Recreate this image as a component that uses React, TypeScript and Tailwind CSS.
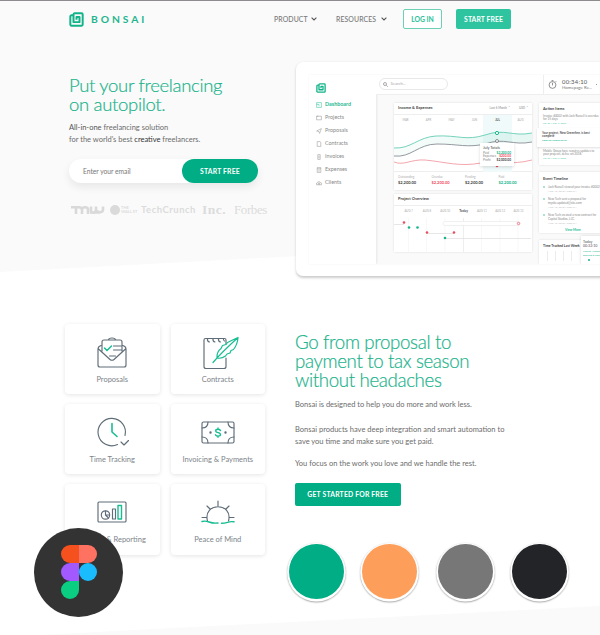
import type { ReactNode } from "react";

function BonsaiMark({ className }: { className: string }) {
  return (
    <svg viewBox="0 0 16 16" fill="none" stroke="#12b389" strokeWidth="2.1" className={className}>
      <path d="M4.3 3.5H2.6A1.2 1.2 0 0 0 1.4 4.7V13.400a1.200 1.200 0 0 0 1.200 1.200H13.400a1.200 1.200 0 0 0 1.200-1.200V2.600a1.200 1.200 0 0 0-1.200-1.200H6A1.200 1.200 0 0 0 4.800 2.600V10.800H11.200V5.300H8v2.900" strokeLinejoin="round" />
    </svg>
  );
}

function Chevron() {
  return (
    <svg viewBox="0 0 6 4" className="h-1 w-1.5" fill="none" stroke="#555" strokeWidth="1.1">
      <path d="M.6.7 3 3 5.400.7" />
    </svg>
  );
}

function Header() {
  return (
    <header className="flex h-[37px] items-center border-t border-[#8d8b8d] pl-[69px]">
      <BonsaiMark className="h-[15px] w-[15px]" />
      <span className="ml-[7px] w-[176px] text-[10.300px] font-bold leading-none tracking-[2.900px] text-[#1db58e]">BONSAI</span>
      <nav className="ml-[7px] flex items-center text-[6.900px] font-medium text-[#777]">
        <span className="w-[37px] tracking-[0.100px]">PRODUCT</span>
        <Chevron />
        <span className="ml-[19px] w-[45px] tracking-[0.100px]">RESOURCES</span>
        <Chevron />
      </nav>
      <a className="ml-[16px] flex h-5 w-[39px] items-center justify-center rounded-[2px] border border-[#6dd0b6] bg-white text-[6.800px] font-bold text-[#2abf98]">LOG IN</a>
      <a className="ml-[14px] flex h-5 w-[55px] items-center justify-center rounded-[2px] bg-[#2ec4a0] text-[6.800px] font-bold tracking-[0.100px] text-white">START FREE</a>
    </header>
  );
}

function PressLogos() {
  return (
    <div className="mt-[19px] flex h-4 items-center text-[#dcdcdc]">
      <svg viewBox="0 0 34 10" className="ml-[2px] h-[10px] w-[34px]" fill="none" stroke="#d9d9d9" strokeWidth="2.600">
        <path d="M0 2.300h8c3 0 2 1 2 2M5 2v7M11 9V4.500c0-3 6-3 6 0V9M20 1.500v4c0 3 4 3 5 0v-4M26 5.500c1 3 6 2 6-1v-3M19 7.500h10" />
      </svg>
      <span className="ml-[5px] h-[10px] w-[10px] rounded-full bg-[#dadada]" />
      <span className="ml-px w-[18px] text-[4px] font-bold leading-[4px]">THE<br />WALL ST</span>
      <span className="ml-[2px] w-[61px] text-[9.500px] font-bold tracking-[0.500px]">TechCrunch</span>
      <span className="w-[32px] font-['Liberation_Serif',serif] text-[13.500px] font-bold tracking-[0.500px]">Inc.</span>
      <span className="font-['Liberation_Serif',serif] text-[13px] tracking-[-0.400px]">Forbes</span>
    </div>
  );
}

function HeroCopy() {
  return (
    <div className="w-[296px] shrink-0 pl-[69px] pt-[38.500px]">
      <h1 className="whitespace-nowrap text-[18.500px] font-light leading-[19px] tracking-[-0.320px] text-[#20b38c] [-webkit-text-stroke:0.200px_#20b38c]">Put your freelancing<br />on autopilot.</h1>
      <p className="mt-[8.500px] whitespace-nowrap text-[7.500px] leading-[11.500px] text-[#6c6c6c]">
        <span className="text-[#555]">All-in-one</span> freelancing solution<br />for the world's best <span className="text-[#333]">creative</span> freelancers.
      </p>
      <form className="mt-[14px] flex h-6 w-[189px] items-center rounded-full bg-white shadow-[0_4px_9px_rgba(0,0,0,0.080)]">
        <span className="flex-1 pl-[14px] text-[6.700px] text-[#777]">Enter your email</span>
        <a className="flex h-6 w-[76px] items-center justify-center rounded-full bg-[#00ad84] text-[6.800px] font-bold tracking-[0.200px] text-white">START FREE</a>
      </form>
      <PressLogos />
    </div>
  );
}

const menu = [
  ["Dashboard", "M1 1h8v8H1zM1 4h4M5 4v3"],
  ["Projects", "M1 2h8v6H1zM1 2h3"],
  ["Proposals", "M1 5 9 1 6 9 5 6z"],
  ["Contracts", "M2 1h5l1 2v6H2z"],
  ["Invoices", "M3 1h4v8H3zM4 4h2M4 6h2"],
  ["Expenses", "M2 1h6v8H2zM2 3h6M4 5h2M4 7h2"],
  ["Clients", "M1 8V5q4-5 8 0v3zM4 8V5h2v3"],
];

function Sidebar() {
  return (
    <aside className="w-[67px] shrink-0 bg-white pl-[7px] pt-[8px] shadow-[1px_0_2px_rgba(0,0,0,0.080)]">
      <BonsaiMark className="h-[10px] w-[10px]" />
      <ul className="mt-[5.500px]">
        {menu.map(([name, d], i) => (
          <li key={name} className={i === 0 ? "flex h-[13px] items-center gap-[3px] text-[5.400px] font-bold text-[#1fb991]" : "flex h-[13px] items-center gap-[3px] text-[5.400px] text-[#8a8a8a]"}>
            <svg viewBox="0 0 10 10" className="h-[6px] w-[6px]" fill="none" stroke="currentColor" strokeWidth="0.800"><path d={d} /></svg>
            {name}
          </li>
        ))}
      </ul>
    </aside>
  );
}

function Topbar() {
  return (
    <div className="flex h-[20px] items-center border-b border-[#eee] bg-white pl-[3px]">
      <div className="flex h-3 w-[69px] items-center gap-[2.500px] rounded-full border border-[#e8e8e8] pl-[3px] text-[4.200px] text-[#aaa]">
        <svg viewBox="0 0 10 10" className="h-[5px] w-[5px]" fill="none" stroke="#777" strokeWidth="1.200"><circle cx="4" cy="4" r="3" /><path d="m6.500 6.500 3 3" /></svg>
        Search...
      </div>
      <div className="ml-[95px] flex h-[20px] items-center gap-[5px] border-l border-[#eee] pl-[4px]">
        <svg viewBox="0 0 10 10" className="h-[9px] w-[9px]" fill="none" stroke="#777" strokeWidth="0.900"><circle cx="5" cy="5.500" r="3.800" /><path d="M4 .5h2M5 3v3M8.500 2l.8-.8" /></svg>
        <div className="w-[33px] whitespace-nowrap leading-[6px]">
          <div className="text-[5.800px] tracking-[0.300px] text-[#555]">00:34:10</div>
          <div className="text-[4.400px] leading-[5px] text-[#777]">Homepage Re...</div>
        </div>
        <i className="-ml-[4px] h-px w-px bg-[#999]" />
      </div>
    </div>
  );
}

function IncomeCard() {
  const months = ["MAR", "APR", "MAY", "JUN", "JUL", "AUG"];
  const stats = [
    ["Outstanding", "$2,200.00", "text-[#444]"],
    ["Overdue", "$2,200.00", "text-[#ef4e5e]"],
    ["Pending", "$2,200.00", "text-[#444]"],
    ["Paid", "$2,200.00", "text-[#14b58b]"],
  ];
  return (
    <section className="h-[87px] bg-white shadow-[0_0_2px_rgba(0,0,0,0.120)]">
      <div className="flex h-[12px] items-center justify-between border-b border-[#eee] pl-1 pr-[4px] text-[4px]">
        <b className="text-[#444]">Income &amp; Expenses</b>
        <span className="flex gap-[9px] text-[3px] text-[#888]"><span>Last 6 Month&nbsp; ˅</span><span>USD&nbsp; ˅</span></span>
      </div>
      <div className="relative h-[57px] border-b border-[#eee]">
        <svg viewBox="0 0 138 57" className="h-[57px] w-[138px]" fill="none">
          <defs><linearGradient id="band" x2="1"><stop stopColor="#17b88f" stopOpacity=".03" /><stop offset="1" stopColor="#17b88f" stopOpacity=".11" /></linearGradient></defs>
          <path d="M89 0h29v57H89z" fill="#f1fafa" />
          <path d="M0 33c17 1 24-11 42-12 22-1 30 5 49-1 20-7 27 2 47-2v9c-20 3-27-5-47 2-18 5-30-2-48 0-17 1-25 14-43 12z" fill="url(#band)" />
          <path d="M0 33c17 1 24-11 42-12 22-1 30 5 49-1 20-7 27 2 47-2" stroke="#65cdb4" strokeWidth=".9" />
          <path d="M0 41c17 2 24-12 43-12 22 0 30 4 48 0 20-7 27 2 47-2" stroke="#888d94" strokeWidth=".9" />
          <path d="M0 47c10 4 17-3 31-2 21 2 34 7 56 3 21-4 28 3 51-3" stroke="#f08e98" strokeWidth=".8" />
          <circle cx="103" cy="18" r="1.600" fill="white" stroke="#17b88f" /><circle cx="103" cy="26" r="1.500" fill="white" stroke="#666" strokeWidth=".7" />
          <circle cx="103" cy="51" r="1.300" fill="#e74d5e" />
        </svg>
        <div className="absolute left-0 top-[3px] flex w-[138px] text-center text-[2.800px] text-[#aaa]">
          {months.map((m) => <span key={m} className={m === "JUL" ? "w-[23px] font-bold text-[#555]" : "w-[23px]"}>{m}</span>)}
        </div>
        <div className="absolute left-[86px] top-[28px] h-[23px] w-[34px] bg-white px-[3px] pt-[3px] text-[3.200px] leading-[3.500px] text-[#888] shadow-[0_1px_3px_rgba(0,0,0,0.150)]">
          <div className="mb-[2.500px] text-[3.800px] text-[#444]">July Totals</div>
          <div className="flex justify-between">Paid<b className="text-[#14b58b]">$2,200.00</b></div>
          <div className="flex justify-between">Expenses<b className="text-[#ef4e5e]">$200.00</b></div>
          <div className="flex justify-between">Profit<b className="text-[#444]">$2,000.00</b></div>
        </div>
      </div>
      <div className="flex pl-[4px] pt-[3.500px]">
        {stats.map(([label, value, tone]) => (
          <div key={label} className="w-[34px] leading-[5px]">
            <div className="text-[3px] leading-[5px] text-[#aaa]">{label}</div>
            <div className={"text-[4px] font-bold leading-[5px] " + tone}>{value}</div>
          </div>
        ))}
      </div>
    </section>
  );
}

function ProjectCard() {
  return (
    <section className="mt-[4px] h-[58px] bg-white shadow-[0_0_2px_rgba(0,0,0,0.120)]">
      <div className="flex h-[12px] items-center border-b border-[#eee] pl-1 text-[4px] font-bold text-[#444]">Project Overview</div>
      <div className="flex h-[12px] items-center pl-[5.500px] text-center text-[2.800px] text-[#aaa]">
        {["AUG 7", "AUG 8", "AUG 10", "Today", "AUG 11", "AUG 12", "AUG 13"].map((d) => <span key={d} className={d === "Today" ? "w-[18.300px] text-[3.300px] font-bold text-[#555]" : "w-[18.300px]"}>{d}</span>)}
      </div>
      <svg viewBox="0 0 138 34" className="h-[34px] w-[138px]" fill="none">
        <path d="M14.500 0v34M32.500 0v34M51 0v34M87.500 0v34M106 0v34M124 0v34" stroke="#f5f5f5" strokeWidth=".7" />
        <path d="M69.500 0v34" stroke="#e2e2e2" strokeWidth=".6" />
        <path d="M0 6.500h10M32 15.500h28M51 20.500h86" stroke="#e1e1e1" strokeWidth=".8" />
        <rect x="49" y="3.500" width="77" height="4" rx="2" fill="white" stroke="#e6e6e6" strokeWidth=".6" />
        <g fill="#e74d5e"><circle cx="10" cy="4.500" r="1.300" /><circle cx="33" cy="14.500" r="1.300" /><circle cx="60" cy="14.500" r="1.300" /></g>
        <circle cx="124.500" cy="5.500" r="1.200" fill="#fff" stroke="#e74d5e" strokeWidth=".7" />
        <g fill="#14b58b"><circle cx="15" cy="9.500" r="1.300" /><circle cx="23.500" cy="9.500" r="1.300" /><circle cx="51" cy="20" r="1.300" /></g>
      </svg>
    </section>
  );
}

function Activity() {
  return (
    <div className="w-[74px] shrink-0 whitespace-nowrap text-[3px] leading-[4px] text-[#888]">
      <section className="h-[62px] bg-white pt-[4px] shadow-[0_0_2px_rgba(0,0,0,0.120)]">
        <b className="block pl-[4px] text-[3.800px] leading-[4px] text-[#444]">Action Items</b>
        <div className="mt-[4px] pl-[4px] leading-[3.700px]">Invoice #0002 with Jack Russell is overdue<br />for 15 days<div className="text-[2.600px] text-[#60cdb1]">SEND A REMINDER</div></div>
        <div className="-ml-[2px] mt-[2px] h-[19px] bg-white pl-[5px] pt-[4px] font-bold leading-[3.700px] text-[#555] shadow-[0_1px_2px_rgba(0,0,0,0.130)]">Your project, New Greenfine, is best<br />complete<div className="text-[2.600px] text-[#23bd96]">CREATE PORTFOLIO</div></div>
        <div className="mt-[3px] pl-[4px] leading-[3.700px]">Mobile Group have requires updates to<br />your projects, delive on 2018.<div className="text-[2.600px] text-[#60cdb1]">SEND A REMINDER</div></div>
      </section>
      <section className="mt-[7px] h-[61px] bg-white pl-[4px] pt-[5px] shadow-[0_0_2px_rgba(0,0,0,0.120)]">
        <b className="block text-[3.800px] text-[#444]">Event Timeline</b>
        {[["Jack Russell viewed your invoice #0002", ""], ["New Tech sent a proposal for", "mysite.updated@site.com"], ["New Tech created a new contract for", "Capital Studios, LLC."]].map(([a, b]) => (
          <div key={a} className="mt-[4px] flex gap-[3px]"><i className="mt-px h-[2px] w-[2px] rounded-full border border-[#6fcfb8]" /><div>{a}{b && <><br />{b}</>}<div className="text-[2.600px] text-[#bbb]">AUG 10, 2018 12:00 PM</div></div></div>
        ))}
        <div className="mt-[3px] pl-[22px] text-[3.200px] font-bold text-[#23bd96]">View More</div>
      </section>
      <section className="relative mt-[7px] h-[24px] bg-white pl-[4px] pt-[4px] shadow-[0_0_2px_rgba(0,0,0,0.120)]">
        <b className="text-[3.400px] text-[#444]">Time Tracked Last Week</b>
        <div className="ml-1 mt-[3px] flex gap-[7px]">{[1, 2, 3, 4].map((n) => <i key={n} className="h-[10px] w-px bg-[#ececec]" />)}</div>
        <div className="absolute -top-[4px] left-[42px] h-[28px] w-[32px] bg-white pl-[2px] pt-[4px] shadow-[0_0_3px_rgba(0,0,0,0.150)]">
          <div className="text-[3.600px] text-[#555]">Today<br />00:32:10</div>
          <div className="mt-[2px] text-[2.500px] text-[#23bd96]">Project Meeting<br />Banking &amp; Legal</div>
          <i className="ml-[5px] mt-px block h-[2px] w-[2px] rounded-full bg-[#14b58b]" />
        </div>
      </section>
    </div>
  );
}

function DashboardPreview() {
  return (
    <div className="mt-[25px] h-[214px] w-[330px] shrink-0 rounded-[7px] bg-white pl-[13px] pt-[12.500px] shadow-[0_1.500px_2.500px_rgba(0,0,0,0.200)]">
      <div className="flex h-[189px] w-[317px] overflow-hidden bg-[#fafafa] shadow-[0_0_1px_rgba(0,0,0,0.100)]">
        <Sidebar />
        <div className="w-[250px]">
          <Topbar />
          <div className="flex gap-[7px] pl-[18px] pt-[8px]">
            <div className="w-[138px] shrink-0"><IncomeCard /><ProjectCard /></div>
            <Activity />
          </div>
        </div>
      </div>
    </div>
  );
}

const G = "#18bd93";
const drawings: Record<string, ReactNode> = {
  Proposals: <>
    <path d="M8 12.500Q5 13.500 5 16v16q0 2 2 2h24q2 0 2-2V16q0-2.500-3-3.500M5.500 16l11.500 10.500q2 1.500 4 0L32.500 16M9 18V9q0-2 2-2h16q2 0 2 2v9M15.500 7q0-2 3.500-2t3.500 2M20.500 13H28M20.500 17H28M16.500 23h6" />
    <path d="m11.500 15 2.500 2.500L18.500 13" stroke={G} strokeWidth="1.500" />
  </>,
  Contracts: <>
    <path d="M27 11V7q0-1.500-1.500-1.500h-19Q5 5.500 5 7v26.500q0 2 2 2h18q2 0 2-2V25M8.500 5.500q-.5 3 2 3.500M14 5.500q-.5 3 2 3.500M19.500 5.500q-.5 3 2 3.500M24.500 5.500q-.5 2 1 2.500" />
    <path d="M14 29.500Q22 20 39 4.500M18 25q-.5-6 4-9.500l1.500-3 3.500-1 1.500-2q5-2.500 10.500-5-.5 7-4.500 12l-2.500 1-1 2.500-3 1-1.500 2q-4 3-8.500 2z" stroke={G} strokeWidth="1.200" />
  </>,
  "Time Tracking": <>
    <path d="M24.500 31.500A13.700 13.700 0 1 1 32 22.500M28 29l3 3 4.500-4.500" />
    <path d="M19 10.500V19l5 4.500" stroke={G} strokeWidth="1.600" />
  </>,
  "Invoicing & Payments": <>
    <rect x="3" y="9" width="32" height="21" rx="1.500" /><path d="M9 9q0 6-6 6M29 9q0 6 6 6M3 24q6 0 6 6M35 24q-6 0-6 6" />
    <circle cx="11.500" cy="19.500" r=".6" fill="#596873" /><circle cx="26.500" cy="19.500" r=".6" fill="#596873" />
    <path d="M21.500 17.500q-1-1.200-2.500-1.200-2.300 0-2.300 1.700 0 1.300 2.300 1.600 2.500.4 2.500 1.900t-2.500 1.600q-1.700 0-2.500-1.300M19 15v1.300M19 23v1.300" stroke={G} strokeWidth="1.400" />
  </>,
  "Finance & Reporting": <>
    <rect x="5" y="9" width="28" height="20" rx="1" /><circle cx="12.500" cy="22" r="4.200" /><path d="M12.500 18v4l3 3M12.500 22h4M19.500 16h3v10h-3z" />
    <path d="M25 12.500h3.500V26H25z" stroke={G} strokeWidth="1.400" />
  </>,
  "Peace of Mind": <>
    <path d="M8.500 28C3.500 9 34.500 9 29.500 28M19 8v5M8 13l3 3M30 13l-3 3M3 24.500h4.500M35 24.500h-4.500" />
    <path d="M3 28.500q3-1 7 .5 4 1.500 9 1M22.500 30.300q3 0 6-1 3-1 6.500-.5" stroke={G} strokeWidth="1.400" />
  </>,
};

function FeatureGrid() {
  return (
    <div className="grid h-[231px] w-[200px] grid-cols-2 gap-x-[11px] gap-y-[10px]">
      {Object.keys(drawings).map((name) => (
        <article key={name} className="flex flex-col items-center rounded-[4px] bg-white pt-[9px] shadow-[0_1px_4px_rgba(0,0,0,0.110)]">
          <svg viewBox="0 0 38 38" className="h-[38px] w-[38px] overflow-visible" fill="none" stroke="#5f6d78" strokeWidth="1.150" strokeLinecap="round" strokeLinejoin="round">{drawings[name]}</svg>
          <h3 className="mt-[4px] whitespace-nowrap text-[7.500px] leading-[10px] text-[#7d848a]">{name}</h3>
        </article>
      ))}
    </div>
  );
}

function Swatches() {
  return (
    <div className="ml-[-6.500px] mt-[38.500px] flex">
      <i className="h-[55px] w-[55px] rounded-full bg-[#00ad84] shadow-[0_0.700px_0_1.800px_#fff,0_1.500px_1.500px_2px_rgba(0,0,0,0.330)]" />
      <i className="ml-[18.500px] h-[55px] w-[55px] rounded-full bg-[#fd9f5b] shadow-[0_0.700px_0_1.800px_#fff,0_1.500px_1.500px_2px_rgba(0,0,0,0.330)]" />
      <i className="ml-[21px] h-[55px] w-[55px] rounded-full bg-[#777] shadow-[0_0.700px_0_1.800px_#fff,0_1.500px_1.500px_2px_rgba(0,0,0,0.330)]" />
      <i className="ml-[19px] h-[55px] w-[55px] rounded-full bg-[#222428] shadow-[0_0.700px_0_1.800px_#fff,0_1.500px_1.500px_2px_rgba(0,0,0,0.330)]" />
    </div>
  );
}

function FigmaBadge() {
  return (
    <div className="absolute left-[34px] top-[527.500px] flex h-[89px] w-[89px] items-center justify-center rounded-full bg-[#333]">
      <svg viewBox="0 0 36 54" className="h-[54px] w-[36px]">
        <path d="M18 0H9a9 9 0 0 0 0 18h9z" fill="#f4511e" /><path d="M18 0h9a9 9 0 0 1 0 18h-9z" fill="#ff7262" />
        <path d="M18 18H9a9 9 0 0 0 0 18h9z" fill="#a259ff" /><circle cx="27" cy="27" r="9" fill="#1abcfe" />
        <path d="M18 36H9a9 9 0 1 0 9 9z" fill="#0acf83" />
      </svg>
    </div>
  );
}

export default function App() {
  return (
    <main className="relative isolate h-[635px] w-[600px] overflow-hidden bg-white font-['Lato',sans-serif]">
      <div className="absolute inset-0 -z-10 bg-[#fafafa] [clip-path:polygon(0_0,600px_0,600px_240px,0_272px)]" />
      <div className="absolute inset-0 -z-10 bg-[#fafafa] [clip-path:polygon(0_637px,600px_606px,600px_635px,0_637px)]" />
      <Header />
      <div className="flex h-[286px]">
        <HeroCopy />
        <DashboardPreview />
      </div>
      <div className="flex pl-[65px] pt-[0.500px]">
        <FeatureGrid />
        <section className="ml-[30px] w-[305px] whitespace-nowrap pt-[9.500px]">
          <h2 className="text-[18.700px] font-light leading-[19px] tracking-[-0.350px] text-[#20b38c] [-webkit-text-stroke:0.200px_#20b38c]">Go from proposal to<br />payment to tax season<br />without headaches</h2>
          <div className="mt-[9px] text-[7.500px] leading-[11.500px] text-[#6c6c6c]">
            <p>Bonsai is designed to help you do more and work less.</p>
            <p className="mt-[13.500px]">Bonsai products have deep integration and smart automation to<br />save you time and make sure you get paid.</p>
            <p className="mt-[11px]">You focus on the work you love and we handle the rest.</p>
          </div>
          <a className="mt-[13.500px] flex h-[22.500px] w-[105.500px] items-center justify-center rounded-[2px] bg-[#00ad84] text-[6.800px] font-bold tracking-[0.200px] text-white">GET STARTED FOR FREE</a>
          <Swatches />
        </section>
      </div>
      <FigmaBadge />
    </main>
  );
}
